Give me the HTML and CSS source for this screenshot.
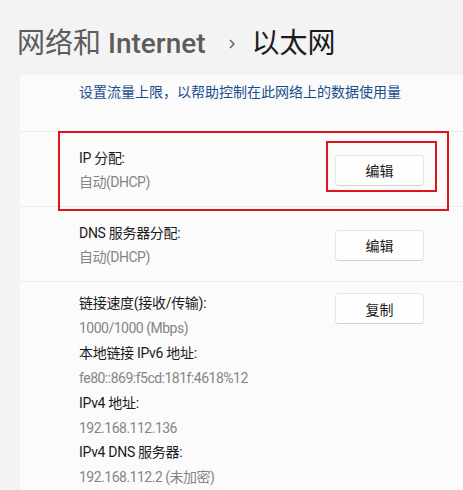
FILE: index.html
```html
<!DOCTYPE html>
<html lang="zh-CN">
<head>
    <meta charset="UTF-8">
    <meta name="viewport" content="width=device-width, initial-scale=1.0">
    <title>以太网</title>
    <link rel="stylesheet" href="styles.css">
</head>
<body>

    <div class="header">
        <span class="crumb">网络和 <b class="latin">Internet</b></span>
        <svg class="chevron" width="8" height="12" viewBox="0 0 8 12">
            <path d="M2 2 L6 6 L2 10" fill="none" stroke="#5c5c5c" stroke-width="1.4"/>
        </svg>
        <span class="page">以太网</span>
    </div>

    <div class="card">
        <div class="link-row">
            <a class="link" href="#">设置流量上限，以帮助控制在此网络上的数据使用量</a>
        </div>

        <!-- IP 分配 -->
        <div class="row highlight">
            <div class="info">
                <div class="label">IP 分配:</div>
                <div class="value">自动(DHCP)</div>
            </div>
            <button class="btn">编辑</button>
            <div class="mark outer"></div>
            <div class="mark inner"></div>
        </div>

        <!-- DNS -->
        <div class="row">
            <div class="info">
                <div class="label">DNS 服务器分配:</div>
                <div class="value">自动(DHCP)</div>
            </div>
            <button class="btn">编辑</button>
        </div>

        <!-- 属性 -->
        <div class="row props">
            <div class="info">
                <div class="label">链接速度(接收/传输):</div>
                <div class="value">1000/1000 (Mbps)</div>
                <div class="label">本地链接 IPv6 地址:</div>
                <div class="value">fe80::869:f5cd:181f:4618%12</div>
                <div class="label">IPv4 地址:</div>
                <div class="value">192.168.112.136</div>
                <div class="label">IPv4 DNS 服务器:</div>
                <div class="value">192.168.112.2 (未加密)</div>
            </div>
            <button class="btn">复制</button>
        </div>
    </div>

</body>
</html>
```

FILE: styles.css
```css
body {
    margin: 0;
    background: #f3f3f3;
    font-family: Roboto, "Noto Sans CJK SC", sans-serif;
    color: #1b1b1b;
    overflow: hidden;
}

.header {
    display: flex;
    align-items: center;
    height: 36px;
    padding: 26px 0 13px 17px;
    font-size: 28px;
    line-height: 36px;
}

.crumb {
    color: #5c5c5c;
}

.crumb .latin {
    font-weight: 500;
}

.chevron {
    margin: 0 16px 0 22px;
}

.page {
    color: #1b1b1b;
}

.card {
    margin-left: 20px;
    background: #fbfbfb;
    font-size: 14px;
}

.link-row {
    padding: 7px 0 29px 59px;
    line-height: 20px;
}

.link {
    color: #1a4d8f;
    text-decoration: none;
}

.row {
    position: relative;
    display: flex;
    justify-content: space-between;
    align-items: center;
    border-top: 1px solid #ebebeb;
    padding: 14px 39px 12px 59px;
}

.info {
    display: flex;
    flex-direction: column;
}

.label,
.value {
    line-height: 24px;
}

.label {
    letter-spacing: -0.3px;
}

.value {
    color: #858585;
    letter-spacing: -0.5px;
}

.props {
    align-items: flex-start;
    padding-top: 9px;
    padding-bottom: 0;
}

.props .label,
.props .value {
    line-height: 24.9px;
}

.props .btn {
    margin-top: 2px;
}

.btn {
    width: 89px;
    height: 31px;
    background: #fefefe;
    border: 1px solid #e5e5e5;
    border-bottom-color: #d0d0d0;
    border-radius: 4px;
    font-family: inherit;
    font-size: 14px;
    color: #1b1b1b;
    cursor: pointer;
}

/* 红框标注 */
.mark {
    position: absolute;
    z-index: 1;
    border: 2px solid #e0141e;
    box-sizing: border-box;
    pointer-events: none;
}

.mark.outer {
    left: 38px;
    top: -1px;
    width: 391px;
    height: 80px;
}

.mark.inner {
    left: 306px;
    top: 9px;
    width: 111px;
    height: 51px;
}
```
